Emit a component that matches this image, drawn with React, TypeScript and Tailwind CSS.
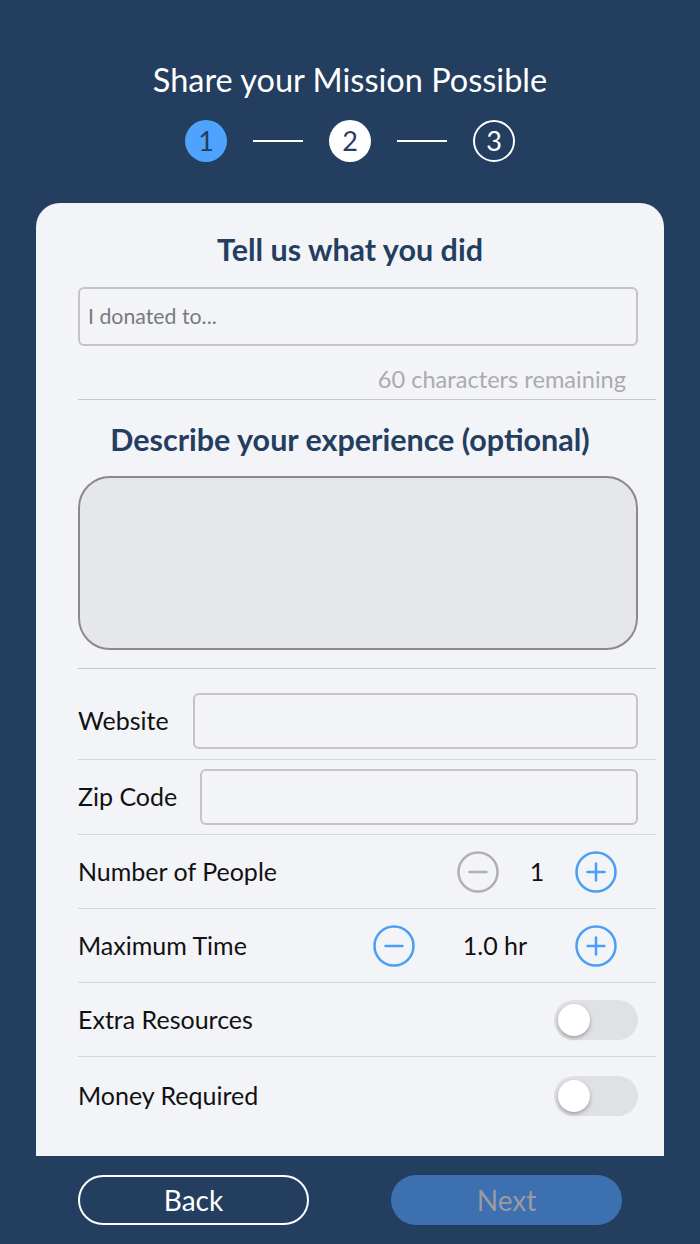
import { useState } from "react";

//@Stepper circle button (minus / plus)
function RoundButton({ kind, active }: { kind: "minus" | "plus"; active: boolean }) {
  const color = active ? "#4a9ff5" : "#b0b0b0";
  return (
    <svg width="42" height="42" viewBox="0 0 42 42" className="shrink-0">
      <circle cx="21" cy="21" r="19.5" fill="none" stroke={color} strokeWidth="2.5" />
      <line x1="12.5" y1="21" x2="29.5" y2="21" stroke={color} strokeWidth="2.5" strokeLinecap="round" />
      {kind === "plus" && (
        <line x1="21" y1="12.5" x2="21" y2="29.5" stroke={color} strokeWidth="2.5" strokeLinecap="round" />
      )}
    </svg>
  );
}

function Toggle() {
  const [on, setOn] = useState(false);
  return (
    <button
      onClick={() => setOn(!on)}
      className={`w-[84px] h-[40px] rounded-full flex items-center px-[4px] ${on ? "bg-[#4a9ff5] justify-end" : "bg-[#e0e1e5] justify-start"}`}
    >
      <span className="w-[32px] h-[32px] rounded-full bg-white shadow-[0_2px_4px_rgba(0,0,0,0.3)]" />
    </button>
  );
}

export default function App() {
  const [people, setPeople] = useState(1);
  const [time, setTime] = useState(1);

  return (
    <div className="w-[700px] h-[1244px] bg-[#233e5f] flex flex-col items-center font-['Lato','Liberation_Sans',sans-serif] overflow-hidden">
      {/* @Header */}
      <h1 className="pt-[60px] text-white text-[32.5px] leading-[40px]">Share your Mission Possible</h1>
      <div className="mt-[20px] flex items-center">
        <div className="w-[42px] h-[42px] rounded-full bg-[#4fa3fc] text-[#233e5f] text-[27px] flex items-center justify-center">1</div>
        <div className="w-[50px] h-[2px] bg-white mx-[26px]" />
        <div className="w-[42px] h-[42px] rounded-full bg-white text-[#233e5f] text-[27px] flex items-center justify-center">2</div>
        <div className="w-[50px] h-[2px] bg-white mx-[26px]" />
        <div className="w-[42px] h-[42px] rounded-full border-2 border-white text-white text-[27px] flex items-center justify-center">3</div>
      </div>

      {/* @Card */}
      <div className="mt-[41px] w-[628px] bg-[#f3f4f8] rounded-t-[24px] pl-[42px] pr-[8px] pt-[29px] pb-[1px]">
        <h2 className="text-center pr-[34px] text-[#233e5f] font-bold text-[30.5px] leading-[34px]">Tell us what you did</h2>
        <div className="mt-[21px] w-[560px] h-[59px] border-2 border-[#c4c4c8] rounded-[6px] flex items-center px-[8px]">
          <span className="text-[21.3px] text-[#7a7a7e]">I donated to...</span>
        </div>
        <p className="mt-[19px] w-[548px] text-right text-[23.6px] leading-[28px] text-[#ababaf]">60 characters remaining</p>
        <div className="mt-[6px] h-[1px] bg-[#c9c9cd]" />

        <h2 className="mt-[22px] text-center pr-[34px] text-[#233e5f] font-bold text-[30.5px] leading-[34px]">Describe your experience (optional)</h2>
        <div className="mt-[20px] w-[560px] h-[174px] bg-[#e6e7eb] border-2 border-[#8a8a8e] rounded-[32px]" />
        <div className="mt-[18px] h-[1px] bg-[#c9c9cd]" />

        {/* @Rows */}
        <div className="pt-[24px] pb-[10px] flex items-center border-b border-[#d6d6da]">
          <span className="text-[25px] text-[#111]">Website</span>
          <div className="ml-auto mr-[18px] w-[445px] h-[56px] border-2 border-[#c4c4c8] rounded-[6px]" />
        </div>
        <div className="py-[9px] flex items-center border-b border-[#d6d6da]">
          <span className="text-[25px] text-[#111]">Zip Code</span>
          <div className="ml-auto mr-[18px] w-[438px] h-[56px] border-2 border-[#c4c4c8] rounded-[6px]" />
        </div>
        <div className="h-[74px] flex items-center border-b border-[#d6d6da]">
          <span className="text-[25px] text-[#111]">Number of People</span>
          <div className="ml-auto mr-[39px] flex items-center">
            <span onClick={() => setPeople(Math.max(1, people - 1))}>
              <RoundButton kind="minus" active={people > 1} />
            </span>
            <span className="w-[76px] text-center text-[25px] text-[#111]">{people}</span>
            <span onClick={() => setPeople(people + 1)}>
              <RoundButton kind="plus" active />
            </span>
          </div>
        </div>
        <div className="h-[74px] flex items-center border-b border-[#d6d6da]">
          <span className="text-[25px] text-[#111]">Maximum Time</span>
          <div className="ml-auto mr-[39px] flex items-center">
            <span onClick={() => setTime(Math.max(0.5, time - 0.5))}>
              <RoundButton kind="minus" active />
            </span>
            <span className="w-[160px] text-center text-[25px] text-[#111]">{time.toFixed(1)} hr</span>
            <span onClick={() => setTime(time + 0.5)}>
              <RoundButton kind="plus" active />
            </span>
          </div>
        </div>
        <div className="h-[74px] flex items-center border-b border-[#d6d6da]">
          <span className="text-[25px] text-[#111]">Extra Resources</span>
          <div className="ml-auto mr-[18px]">
            <Toggle />
          </div>
        </div>
        <div className="h-[78px] flex items-center">
          <span className="text-[25px] text-[#111]">Money Required</span>
          <div className="ml-auto mr-[18px]">
            <Toggle />
          </div>
        </div>
        <div className="h-[20px]" />
      </div>

      {/* @Footer buttons */}
      <div className="mt-[19px] w-full px-[78px] flex justify-between">
        <button className="w-[231px] h-[50px] rounded-full border-2 border-white text-white text-[28px]">Back</button>
        <button className="w-[231px] h-[50px] rounded-full bg-[#3d70b0] text-[#9a9aa0] text-[28px]">Next</button>
      </div>
    </div>
  );
}
